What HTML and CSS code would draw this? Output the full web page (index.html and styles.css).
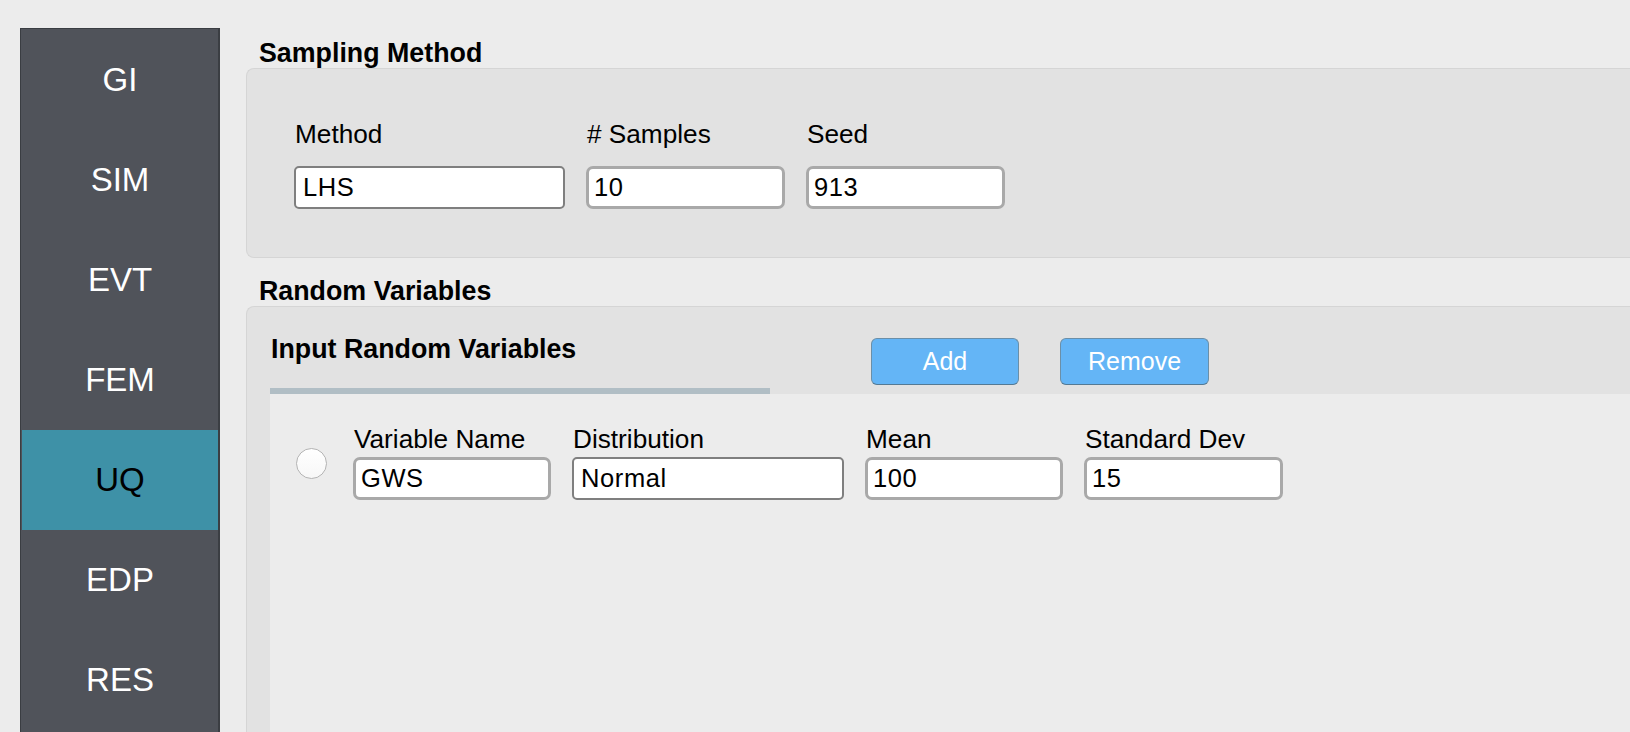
FILE: index.html
```html
<!DOCTYPE html>
<html>
<head>
<meta charset="utf-8">
<link rel="stylesheet" href="styles.css">
</head>
<body>
<div class="sidebar">
  <div class="nav-item">GI</div>
  <div class="nav-item">SIM</div>
  <div class="nav-item">EVT</div>
  <div class="nav-item">FEM</div>
  <div class="nav-item active">UQ</div>
  <div class="nav-item">EDP</div>
  <div class="nav-item">RES</div>
</div>
<div class="main">
  <div class="section-title">Sampling Method</div>
  <div class="panel panel-sampling">
    <div class="field-row row-top">
      <div class="field-col w-method">
        <div class="label">Method</div>
        <div class="input combo">LHS</div>
      </div>
      <div class="field-col w-200">
        <div class="label"># Samples</div>
        <div class="input">10</div>
      </div>
      <div class="field-col w-200">
        <div class="label">Seed</div>
        <div class="input">913</div>
      </div>
    </div>
  </div>
  <div class="section-title second">Random Variables</div>
  <div class="panel panel-rv">
    <div class="tabbar">
      <div class="tab">Input Random Variables</div>
      <button class="btn btn-add">Add</button>
      <button class="btn btn-remove">Remove</button>
    </div>
    <div class="tab-body">
      <div class="var-row">
        <div class="radio"></div>
        <div class="field-row row-var">
          <div class="field-col w-198">
            <div class="label tight">Variable Name</div>
            <div class="input">GWS</div>
          </div>
          <div class="field-col w-dist">
            <div class="label tight">Distribution</div>
            <div class="input combo">Normal</div>
          </div>
          <div class="field-col w-198">
            <div class="label tight">Mean</div>
            <div class="input">100</div>
          </div>
          <div class="field-col w-199">
            <div class="label tight">Standard Dev</div>
            <div class="input">15</div>
          </div>
        </div>
      </div>
    </div>
  </div>
</div>
</body>
</html>
```

FILE: styles.css
```css
html, body {
  margin: 0;
  padding: 0;
}
body {
  width: 1630px;
  height: 732px;
  overflow: hidden;
  background: #ececec;
  display: flex;
  align-items: flex-start;
  font-family: "Liberation Sans", Arial, sans-serif;
  color: #000;
}

/* Sidebar */
.sidebar {
  margin-top: 28px;
  margin-left: 20px;
  width: 196px;
  height: 702px;
  overflow: hidden;
  background: #50535a;
  border-left: 1px solid #3a3d42;
  border-top: 1px solid #3a3d42;
  border-right: 2px solid #3b3e43;
  padding: 1px 0 0 1px;
  flex-shrink: 0;
}
.nav-item {
  height: 100px;
  display: flex;
  align-items: center;
  justify-content: center;
  color: #ffffff;
  font-size: 33px;
}
.nav-item.active {
  background: #3e91a7;
  color: #000;
}

/* Main */
.main {
  margin-left: 26px;
  padding-top: 38px;
  flex: 1;
  display: flex;
  flex-direction: column;
}
.section-title {
  font-weight: bold;
  font-size: 26.8px;
  line-height: 30px;
  padding-left: 13px;
}
.section-title.second {
  margin-top: 18px;
}
.panel {
  background: #e2e2e2;
  border: 1px solid #d5d5d5;
  border-right: none;
  border-radius: 8px 0 0 8px;
  box-sizing: border-box;
}
.panel-sampling {
  height: 190px;
  padding: 50px 0 0 47px;
}
.panel-rv {
  height: 426px;
  overflow: hidden;
  padding-left: 23px;
  display: flex;
  flex-direction: column;
  border-bottom: none;
  border-radius: 8px 0 0 0;
}

.field-row {
  display: flex;
  gap: 21px;
}
.field-col {
  display: flex;
  flex-direction: column;
}
.w-method { width: 271px; }
.w-200 { width: 199px; }
.w-198 { width: 198px; }
.w-199 { width: 199px; }
.w-dist { width: 272px; }

.label {
  font-size: 26.2px;
  line-height: 30px;
  padding-left: 1px;
  margin-bottom: 17px;
  white-space: nowrap;
}
.label.tight {
  line-height: 26px;
  margin-bottom: 5px;
}
.input {
  height: 43px;
  box-sizing: border-box;
  background: #ffffff;
  border: 3px solid #a9a9a9;
  border-radius: 7px;
  font-size: 25.5px;
  letter-spacing: 0.6px;
  line-height: 37px;
  padding-left: 5px;
  white-space: nowrap;
}
.input.combo {
  border: 2px solid #7f7f7f;
  border-radius: 5px;
  line-height: 39px;
  padding-left: 7px;
}

/* Tabs */
.tabbar {
  display: flex;
  align-items: flex-start;
}
.tab {
  width: 500px;
  box-sizing: border-box;
  padding-top: 27px;
  padding-left: 1px;
  padding-bottom: 24px;
  border-bottom: 6px solid #b1bec5;
  font-weight: bold;
  font-size: 26.8px;
  line-height: 30px;
  white-space: nowrap;
}
.btn {
  margin-top: 31px;
  width: 148px;
  height: 47px;
  background: #64b5f6;
  border: 1px solid #6b8fa8;
  border-bottom-color: #557a94;
  border-radius: 6px;
  color: #ffffff;
  font-family: "Liberation Sans", Arial, sans-serif;
  font-size: 25px;
  padding: 0;
}
.btn-add { margin-left: 101px; }
.btn-remove { margin-left: 41px; width: 149px; }

.tab-body {
  flex: 1;
  background: #ececec;
  padding: 32px 0 0 26px;
}
.var-row {
  display: flex;
  align-items: center;
}
.radio {
  width: 31px;
  height: 31px;
  box-sizing: border-box;
  border-radius: 50%;
  background: linear-gradient(#ffffff, #f7f7f7);
  border: 1px solid #b4b4b4;
  margin-right: 26px;
  margin-top: 1px;
}
```
